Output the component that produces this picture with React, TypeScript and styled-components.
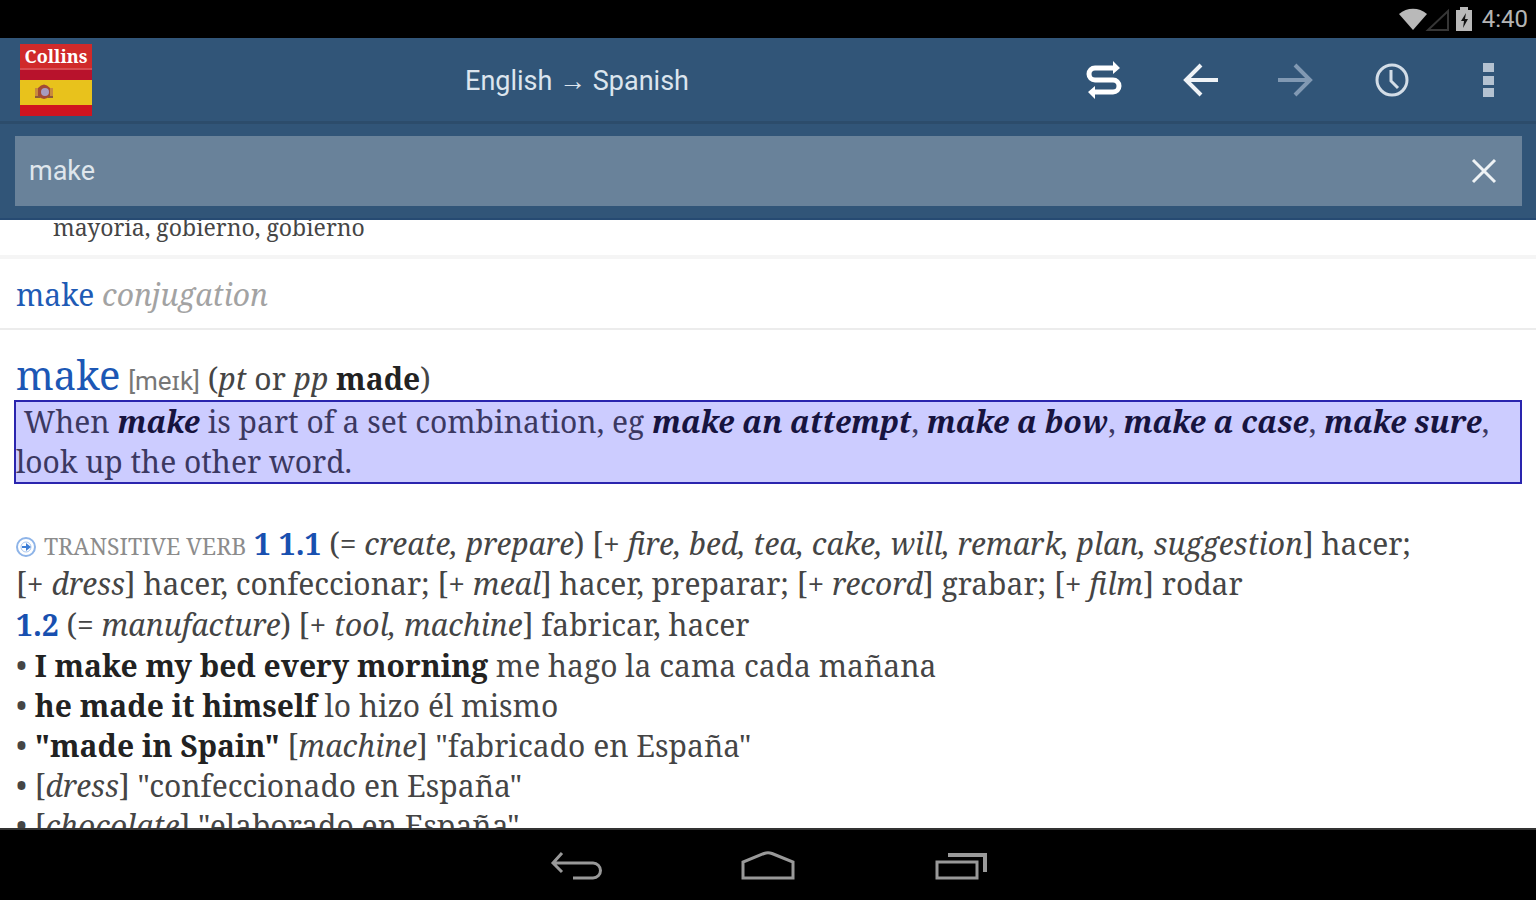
import React, { useState } from "react";
import styled, { createGlobalStyle } from "styled-components";

const serif = `"Noto Serif", "Droid Serif", "DejaVu Serif Condensed", "DejaVu Serif", serif`;
const sans = `Roboto, "Noto Sans", sans-serif`;

const GlobalStyle = createGlobalStyle`
  *, *::before, *::after { box-sizing: border-box; }
  body { margin: 0; background: #000; }
  button { border: 0; padding: 0; margin: 0; background: none; cursor: pointer; }
  p, h1, h2, ul { margin: 0; padding: 0; }
`;

const Screen = styled.div`
  display: flex;
  flex-direction: column;
  height: 100vh;
  overflow: hidden;
  background: #fff;
`;

const StatusBar = styled.div`
  display: flex;
  align-items: center;
  justify-content: flex-end;
  flex: none;
  height: 38px;
  padding-right: 8px;
  background: #000;
  color: #b4b4b4;
  font: 24px/36px ${sans};
`;

const StatusIcons = styled.svg`
  width: 80px;
  height: 28px;
  margin-right: 4px;
`;

const Toolbar = styled.header`
  display: flex;
  align-items: center;
  flex: none;
  height: 86px;
  padding-left: 20px;
  background: #315578;
  border-bottom: 3px solid #2c4c6b;
`;

const Logo = styled.svg`
  width: 72px;
  height: 72px;
  flex: none;
`;

const LanguageTitle = styled.h1`
  flex: 1;
  padding: 2px 0 0 6px;
  color: #dce5ee;
  font: 400 27px/40px ${sans};
  text-align: center;
`;

const Actions = styled.nav`
  display: flex;
`;

const ToolButton = styled.button<{ $dim?: boolean }>`
  display: flex;
  align-items: center;
  justify-content: center;
  width: 96px;
  height: 72px;
  color: ${(p) => (p.$dim ? "#8199b3" : "#eef2f6")};

  svg { width: 40px; height: 40px; }
`;

const SearchArea = styled.form`
  flex: none;
  padding: 12px 14px 12px 15px;
  background: #315578;
  border-bottom: 2px solid #264a72;
`;

const SearchBox = styled.div`
  display: flex;
  align-items: center;
  height: 70px;
  background: #69829a;
`;

const SearchInput = styled.input`
  flex: 1;
  min-width: 0;
  height: 100%;
  padding: 0 14px;
  border: 0;
  outline: 0;
  background: transparent;
  color: #dfe6ec;
  font: 27px ${sans};
`;

const ClearButton = styled.button`
  display: flex;
  align-items: center;
  justify-content: center;
  width: 76px;
  height: 100%;
  color: #eef2f5;

  svg { width: 28px; height: 28px; }
`;

const Article = styled.main`
  flex: 1;
  min-height: 0;
  overflow: hidden;
  color: #454545;
  font: 30px/40px ${serif};

  b { color: #222; }
`;

const PreviousEntry = styled.section`
  display: flex;
  align-items: flex-end;
  height: 39px;
  padding: 0 53px 12px;
  overflow: hidden;
  border-bottom: 4px solid #f5f5f5;
  font-size: 23px;
  line-height: 32px;
`;

const Conjugation = styled.section`
  padding: 16px 16px 13px;
  border-bottom: 2px solid #ececec;
  color: #a3a3a3;
`;

const EntryLink = styled.a`
  color: #1f5bb5;
  text-decoration: none;
`;

const Entry = styled.section`
  padding: 24px 14px 0;
`;

const Headword = styled.h2`
  height: 46px;
  padding-left: 2px;
  font-size: 30px;
  font-weight: 400;
  line-height: 50px;
  white-space: nowrap;
`;

const Lemma = styled.span`
  color: #1c57b5;
  font-size: 40px;
  line-height: 1;
`;

const Phonetic = styled.span`
  color: #777;
  font-family: ${sans};
  font-size: 26px;
  line-height: 1;
`;

const Note = styled.p`
  border: 2px solid #2a25ae;
  background: #ccf;
  color: #3b3861;
  white-space: nowrap;

  b { color: #17143f; }
`;

const Senses = styled.div`
  padding: 40px 2px 0;
  white-space: nowrap;
`;

const Sense = styled.p`
  margin-bottom: 1px;
`;

const SenseNumber = styled.strong`
  color: #1850b0;
`;

const WordClass = styled.span`
  color: #8c8c8c;
  font-size: 23px;
  line-height: 1;
`;

const Marker = styled.svg`
  width: 20px;
  height: 20px;
  margin-right: 8px;
  vertical-align: middle;
`;

const Examples = styled.ul`
  list-style: none;
`;

const Example = styled.li`
  &::before { content: "• "; }
`;

const SystemNav = styled.nav`
  display: flex;
  align-items: center;
  justify-content: center;
  gap: 96px;
  flex: none;
  height: 72px;
  padding-top: 2px;
  border-top: 2px solid #333;
  background: #000;
`;

const SystemButton = styled.button`
  display: flex;
  align-items: center;
  justify-content: center;
  width: 96px;
  height: 68px;
  color: #999;

  svg { width: 60px; height: 40px; }
`;

export default function App() {
  const [query, setQuery] = useState("make");
  return (
    <Screen>
      <GlobalStyle />
      <StatusBar>
        <StatusIcons viewBox="0 0 80 28" aria-hidden="true">
          <path d="M1 9C9 2 21 2 29 9L15 25Z" fill="#b9b9b9" />
          <path d="M50 6V25H30Z" fill="none" stroke="#363636" strokeWidth="2" />
          <path d="M58 5h4V2h8v3h4v21H58Z" fill="#b9b9b9" />
          <path d="M68 8l-5 8h3l-1 7 5-9h-3Z" fill="#111" />
        </StatusIcons>
        <time>4:40</time>
      </StatusBar>
      <Toolbar>
        <Logo viewBox="0 0 72 72" role="img" aria-label="Collins Spanish">
          <rect width="72" height="72" fill="#b8122c" />
          <rect width="72" height="24" fill="#d02a2a" />
          <rect y="24" width="72" height="2" fill="#d94a50" />
          <rect y="36" width="72" height="25" fill="#e8c21c" />
          <rect y="61" width="72" height="11" fill="#d0141f" />
          <text x="36" y="19" textAnchor="middle" fill="#fff" fontFamily="Noto Serif, DejaVu Serif, serif" fontWeight="700" fontSize="18">Collins</text>
          <path d="M15 44h3v10h-3zM30 44h3v10h-3z" fill="#c98a3c" />
          <path d="M18 44q6-7 12 0v8q-6 6-12 0z" fill="#a34a34" />
          <circle cx="25" cy="48" r="4" fill="#a79bc0" />
          <path d="M15 53h5M28 53h5" stroke="#8d5a3a" strokeWidth="2" />
        </Logo>
        <LanguageTitle>English → Spanish</LanguageTitle>
        <Actions>
          <ToolButton type="button" aria-label="Swap languages">
            <svg viewBox="0 0 40 40" fill="none" stroke="#fff" strokeWidth="5">
              <path d="M31 8H11a6 6 0 0 0 0 12H29a6 6 0 0 1 0 12H9" />
              <path d="M29 1l7 7-7 6ZM11 26l-7 6 7 7Z" fill="#fff" stroke="none" />
            </svg>
          </ToolButton>
          <ToolButton type="button" aria-label="Back">
            <svg viewBox="0 0 40 40" fill="none" stroke="currentColor" strokeWidth="4">
              <path d="M38 20H6M21 5L6 20l15 15" />
            </svg>
          </ToolButton>
          <ToolButton type="button" aria-label="Forward" $dim>
            <svg viewBox="0 0 40 40" fill="none" stroke="currentColor" strokeWidth="4">
              <path d="M2 20h32M19 5l15 15-15 15" />
            </svg>
          </ToolButton>
          <ToolButton type="button" aria-label="History">
            <svg viewBox="0 0 40 40" fill="none" stroke="#d3dde7" strokeWidth="3">
              <circle cx="20" cy="20" r="15" />
              <path d="M19 10v11l7 7" />
            </svg>
          </ToolButton>
          <ToolButton type="button" aria-label="More options">
            <svg viewBox="0 0 40 40" fill="#b4c2d1">
              <path d="M15 3h11v9H15zM15 16h11v9H15zM15 28h11v9H15z" />
            </svg>
          </ToolButton>
        </Actions>
      </Toolbar>
      <SearchArea onSubmit={(e) => e.preventDefault()}>
        <SearchBox>
          <SearchInput aria-label="Search word" value={query} onChange={(e) => setQuery(e.target.value)} />
          <ClearButton type="button" aria-label="Clear" onClick={() => setQuery("")}>
            <svg viewBox="0 0 28 28" fill="none" stroke="currentColor" strokeWidth="3">
              <path d="M3 3l22 22M25 3L3 25" />
            </svg>
          </ClearButton>
        </SearchBox>
      </SearchArea>
      <Article>
        <PreviousEntry>mayoría, gobierno, gobierno</PreviousEntry>
        <Conjugation>
          <EntryLink href="#make">make</EntryLink> <i>conjugation</i>
        </Conjugation>
        <Entry id="make">
          <Headword>
            <Lemma>make</Lemma> <Phonetic>[meɪk]</Phonetic> (<i>pt</i> or <i>pp</i> <b>made</b>)
          </Headword>
          <Note>
            &nbsp;When <b><i>make</i></b> is part of a set combination, eg <b><i>make an attempt</i></b>,{" "}
            <b><i>make a bow</i></b>, <b><i>make a case</i></b>, <b><i>make sure</i></b>,
            <br />
            look up the other word.
          </Note>
          <Senses>
            <Sense>
              <Marker viewBox="0 0 20 20" fill="none" aria-hidden="true">
                <circle cx="10" cy="10" r="9" stroke="#8eb4e8" strokeWidth="2" />
                <circle cx="10" cy="10" r="5" stroke="#a9c6ee" strokeWidth="1" />
                <path d="M6 9h4V6l5 4-5 4v-3H6Z" fill="#3f7fd6" />
              </Marker>
              <WordClass>TRANSITIVE VERB</WordClass> <SenseNumber>1 1.1</SenseNumber> (= <i>create, prepare</i>) [+{" "}
              <i>fire, bed, tea, cake, will, remark, plan, suggestion</i>] hacer;
              <br />
              [+ <i>dress</i>] hacer, confeccionar; [+ <i>meal</i>] hacer, preparar; [+ <i>record</i>] grabar; [+{" "}
              <i>film</i>] rodar
            </Sense>
            <Sense>
              <SenseNumber>1.2</SenseNumber> (= <i>manufacture</i>) [+ <i>tool, machine</i>] fabricar, hacer
            </Sense>
            <Examples>
              <Example><b>I make my bed every morning</b> me hago la cama cada mañana</Example>
              <Example><b>he made it himself</b> lo hizo él mismo</Example>
              <Example><b>"made in Spain"</b> [<i>machine</i>] "fabricado en España"</Example>
              <Example>[<i>dress</i>] "confeccionado en España"</Example>
              <Example>[<i>chocolate</i>] "elaborado en España"</Example>
            </Examples>
          </Senses>
        </Entry>
      </Article>
      <SystemNav>
        <SystemButton type="button" aria-label="System back">
          <svg viewBox="0 0 60 40" fill="none" stroke="currentColor" strokeWidth="3">
            <path d="M7 17H47a7 7 0 0 1 0 15H27M16 7L7 17l9 9" />
          </svg>
        </SystemButton>
        <SystemButton type="button" aria-label="Home">
          <svg viewBox="0 0 60 40" fill="none" stroke="currentColor" strokeWidth="3">
            <path d="M5 32V16L26 7.500Q30 6 34 7.500L55 16V32Z" />
          </svg>
        </SystemButton>
        <SystemButton type="button" aria-label="Recent apps">
          <svg viewBox="0 0 60 40" fill="none" stroke="currentColor" strokeWidth="3">
            <path d="M7 16H47V32H7Z" />
            <path d="M18 9H55V26" strokeWidth="4" />
          </svg>
        </SystemButton>
      </SystemNav>
    </Screen>
  );
}
